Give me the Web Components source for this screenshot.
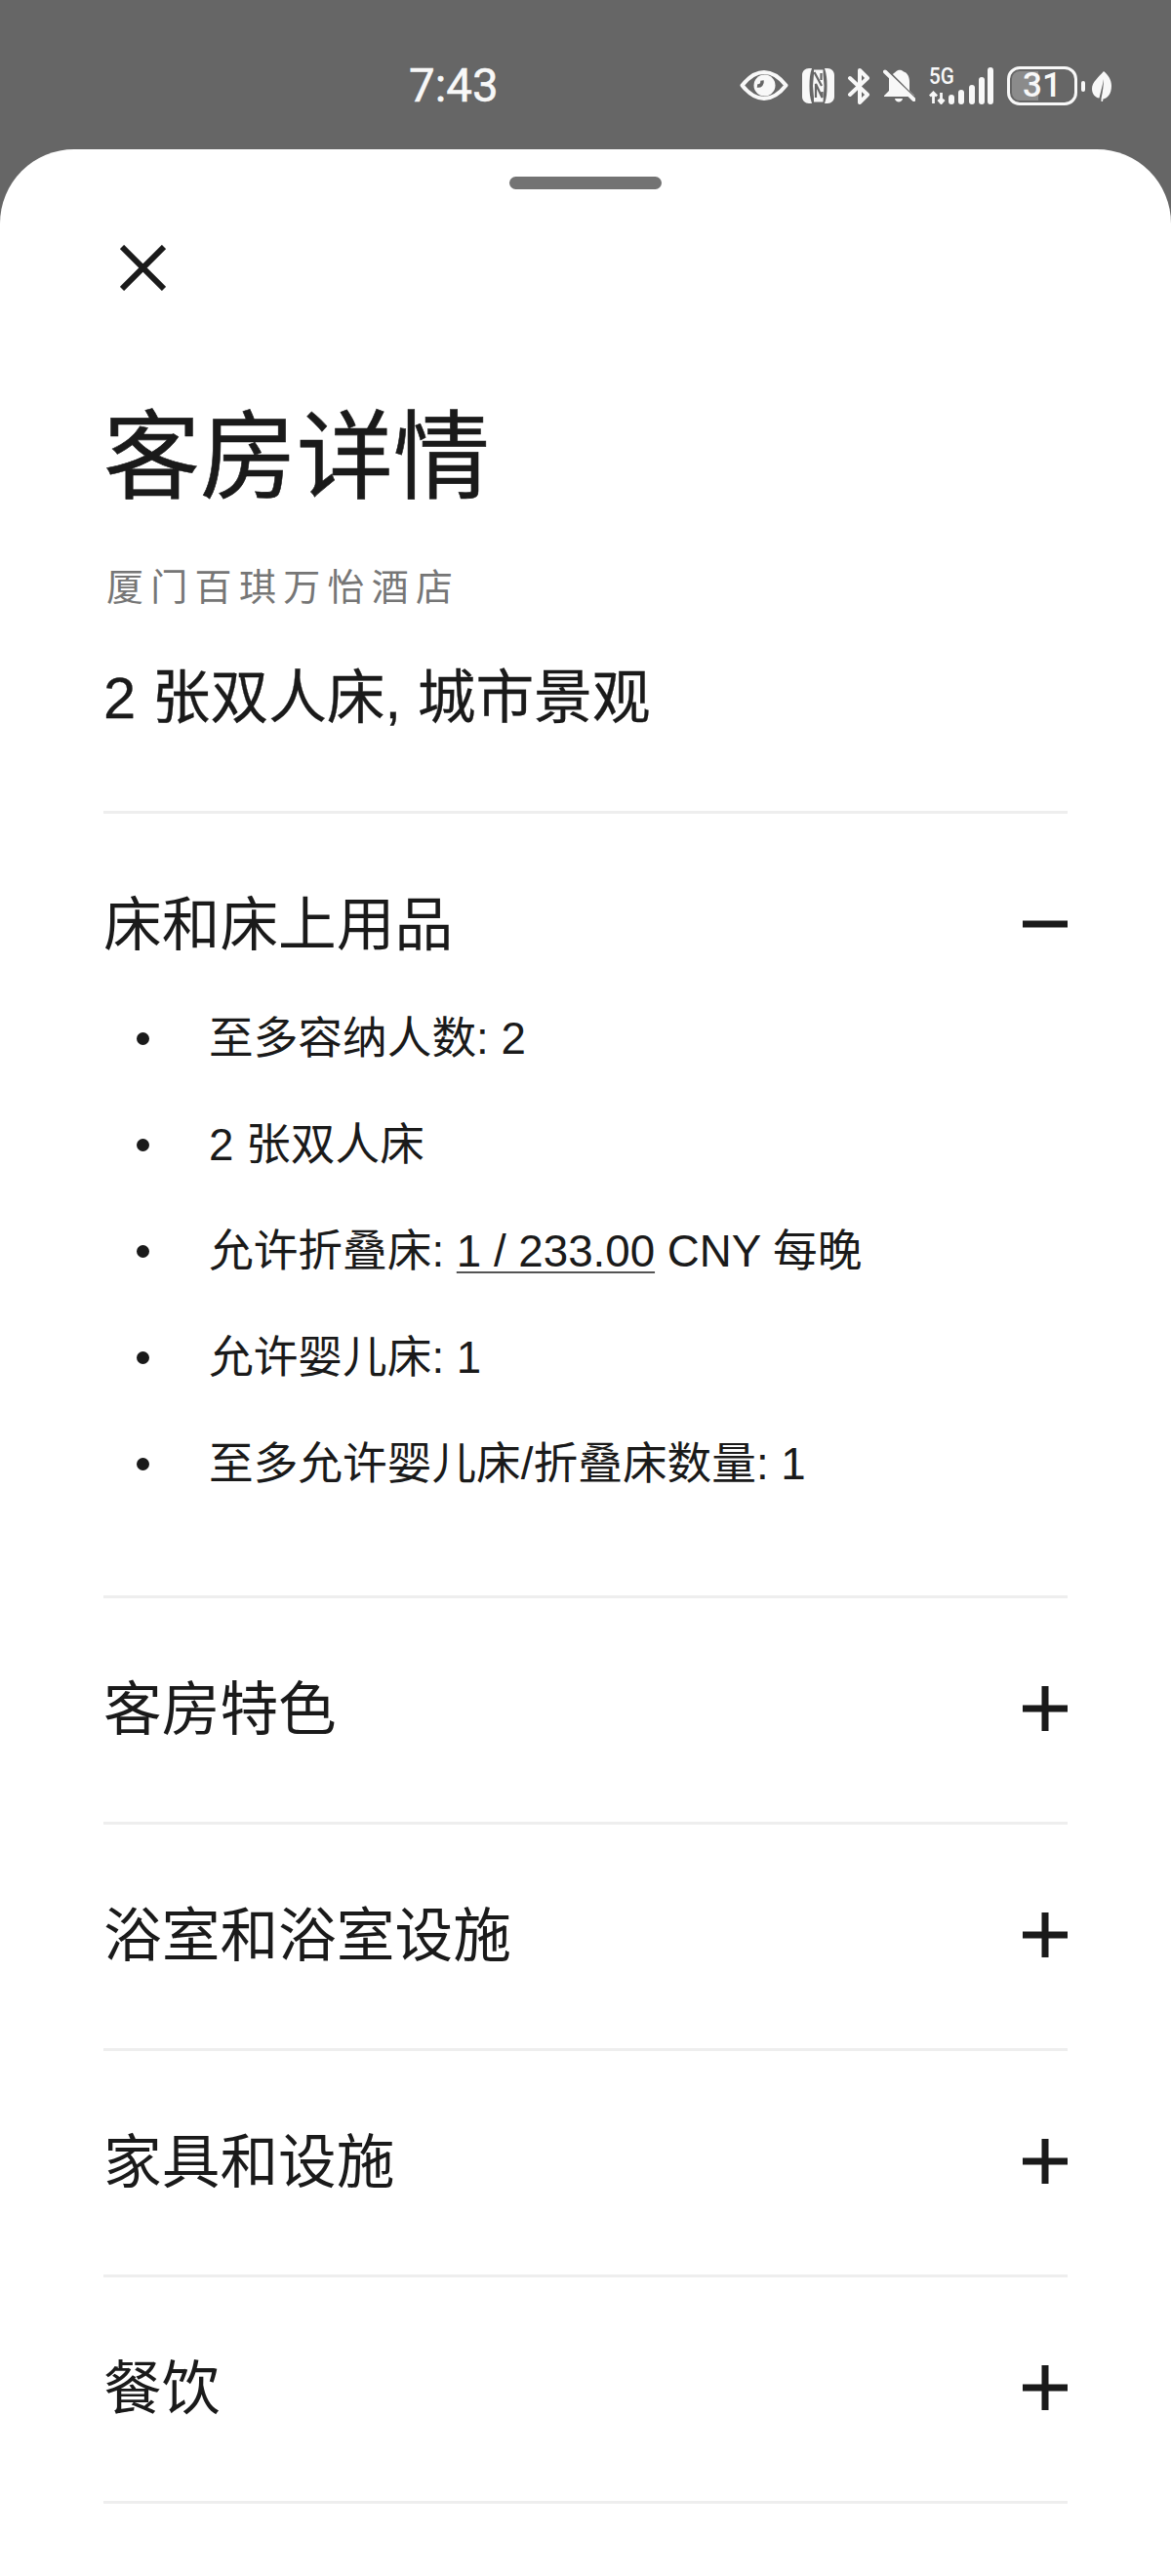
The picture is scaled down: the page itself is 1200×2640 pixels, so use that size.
<!DOCTYPE html>
<html lang="zh-CN">
<head>
<meta charset="utf-8">
<title>客房详情</title>
<style>
    html, body { margin: 0; background: #666666; }
    body { font-family: "Liberation Sans", "Noto Sans CJK SC", sans-serif; color: #1a1a1a; }
</style>
</head>
<body>
<phone-page>
    <status-bar slot="status" time="7:43" battery="31"></status-bar>
    <room-sheet slot="sheet" heading="客房详情" hotel="厦门百琪万怡酒店" room="2 张双人床, 城市景观">
        <room-section heading="床和床上用品" open>
            <room-bullet>至多容纳人数: 2</room-bullet>
            <room-bullet>2 张双人床</room-bullet>
            <room-bullet>允许折叠床: <u>1 / 233.00</u> CNY 每晚</room-bullet>
            <room-bullet>允许婴儿床: 1</room-bullet>
            <room-bullet>至多允许婴儿床/折叠床数量: 1</room-bullet>
        </room-section>
        <room-section heading="客房特色"></room-section>
        <room-section heading="浴室和浴室设施"></room-section>
        <room-section heading="家具和设施"></room-section>
        <room-section heading="餐饮"></room-section>
    </room-sheet>
</phone-page>

<script>
class PhonePage extends HTMLElement {
    constructor() {
        super();
        this.root = this.attachShadow({mode: "open"});
        this.root.innerHTML = `
            <style>
                :host { display: flex; flex-direction: column; width: 1200px; height: 2640px; overflow: hidden; }
            </style>
            <slot name="status"></slot>
            <slot name="sheet"></slot>
        `;
    }
}

class StatusBar extends HTMLElement {
    constructor() {
        super();
        this.root = this.attachShadow({mode: "open"});
        const grey = "#666666";
        this.root.innerHTML = `
            <style>
                :host { display: flex; align-items: center; box-sizing: border-box; height: 153px; padding: 68px 61px 45px 419px; background: #666666; color: #f8f8f8; }
                .time { font: 400 47.500px/43px Roboto, sans-serif; -webkit-text-stroke: .5px #f8f8f8; }
                .icons { display: flex; align-items: center; margin-left: auto; }
                svg { display: block; flex: none; }
                .signal { display: grid; width: 66px; height: 38px; margin-left: 14px; }
                .signal > * { grid-area: 1 / 1; }
                .net { font: 500 24px/18px Roboto, sans-serif; transform: scaleX(.86); transform-origin: left top; }
                .battery { box-sizing: border-box; width: 72px; height: 40px; margin-left: 14px; padding: 2px; border: 3px solid #f8f8f8; border-radius: 13px;
                    background: linear-gradient(90deg, #8b8b8b 0 43%, transparent 43%) content-box;
                    font: 500 35px/30px Roboto, sans-serif; text-align: center; }
            </style>
            <span class="time">${this.getAttribute("time")}</span>
            <div class="icons">
                <svg width="50" height="31" viewBox="0 0 50 31" style="margin-top:-1px">
                    <path d="M2.500 15.500C10 6 17 2 25 2s15 4 22.500 13.500C40 25 33 29 25 29S10 25 2.500 15.500Z" fill="none" stroke="#f8f8f8" stroke-width="4" stroke-linejoin="round"/>
                    <circle cx="25.500" cy="15.500" r="11" fill="#f8f8f8"/>
                    <path d="M23 10.500c.6 3.500-1.500 6-5 5.500" fill="none" stroke="${grey}" stroke-width="3.500"/>
                </svg>
                <svg width="33" height="36" viewBox="0 0 33 36" style="margin-left:14px">
                    <path d="M7 0C3 0 0 3 0 7V29C0 33 3 36 7 36H10C8 30 7.500 25 7.500 18S8 5 10 0Z" fill="#f8f8f8"/>
                    <path d="M26 36C30 36 33 33 33 29V7C33 3 30 0 26 0H23C25 6 25.500 11 25.500 18S25 31 23 36Z" fill="#f8f8f8"/>
                    <path d="M12 1.500H21.500V6L22.500 18 21.500 34.500H12V30L11 18 12 6Z" fill="#f8f8f8"/>
                    <path d="M12.500 4 20 18M14 30V16L20.500 30V24M19.500 5V12" fill="none" stroke="${grey}" stroke-width="2.200"/>
                </svg>
                <svg width="25" height="37" viewBox="0 0 25 37" style="margin-left:13px">
                    <path d="M3 10 21 27 13 35V2L21 10 3 27" fill="none" stroke="#f8f8f8" stroke-width="4" stroke-linecap="round" stroke-linejoin="round"/>
                </svg>
                <svg width="33" height="34" viewBox="0 0 33 34" style="margin-left:12px">
                    <path d="M13 2.500C15 0 19 0 21 2.500 25 3.500 27 8 27 13V22L32 27V28H1V27L6 22V8Z" fill="#f8f8f8"/>
                    <path d="M12 30H20C19.500 34.500 12.500 34.500 12 30Z" fill="#f8f8f8"/>
                    <path d="M-1 -3 33 31" stroke="${grey}" stroke-width="4"/>
                    <path d="M2 2.500 31.500 31" stroke="#f8f8f8" stroke-width="4" stroke-linecap="round"/>
                </svg>
                <div class="signal">
                    <span class="net">5G</span>
                    <svg width="66" height="38" viewBox="0 0 66 38">
                        <path d="M4.500 37V26.500M1 29.500 4.500 26 8 29.500M12.500 26V36.500M9.500 33 12.500 36.500 15.500 33" fill="none" stroke="#f8f8f8" stroke-width="2.800"/>
                        <rect x="20" y="28" width="6" height="10" rx="3" fill="#f8f8f8"/>
                        <rect x="30" y="23" width="6" height="15" rx="3" fill="#f8f8f8"/>
                        <rect x="41" y="18" width="6" height="20" rx="3" fill="#f8f8f8"/>
                        <rect x="51" y="10" width="6" height="28" rx="3" fill="#f8f8f8"/>
                        <rect x="60" y="0" width="6" height="38" rx="3" fill="#f8f8f8"/>
                    </svg>
                </div>
                <div class="battery">${this.getAttribute("battery")}</div>
                <svg width="4" height="11" viewBox="0 0 4 11" style="margin-left:4px">
                    <rect width="4" height="11" rx="2" fill="#f8f8f8"/>
                </svg>
                <svg width="20" height="31" viewBox="0 0 20 31" style="margin-left:7px">
                    <path d="M12 0C17 4 20 9 20 15 20 23 16 28 11.500 28.500L11 31H9.500L9.500 28C11 21 12 14 12 8 11 14 9 21 7.500 27.500 3 27 0 23 0 18 0 11 7 6 12 0Z" fill="#f8f8f8"/>
                </svg>
            </div>
        `;
    }
}

class RoomSheet extends HTMLElement {
    constructor() {
        super();
        this.root = this.attachShadow({mode: "open"});
        this.root.innerHTML = `
            <style>
                :host { display: block; flex: 1; box-sizing: border-box; padding: 28px 106px 0; background: #ffffff; border-radius: 76px 76px 0 0; color: #1a1a1a; }
                .handle { width: 156px; height: 13px; margin: 0 auto; border-radius: 7px; background: #737373; }
                .close { display: block; margin: 57px 0 0 17px; }
                h1 { margin: 111px 0 0; font-size: 99px; line-height: 120px; font-weight: 400; -webkit-text-stroke: .6px #1a1a1a; }
                .hotel { margin: 48px 0 0 3px; font-size: 38px; line-height: 50px; letter-spacing: 7.300px; color: #767676; }
                .room { margin: 53px 0 79px; font-size: 59.700px; line-height: 72px; -webkit-text-stroke: .3px #1a1a1a; }
            </style>
            <div class="handle"></div>
            <svg class="close" width="47" height="47" viewBox="0 0 47 47">
                <path d="M2 2 45 45M45 2 2 45" stroke="#1a1a1a" stroke-width="6" fill="none"/>
            </svg>
            <h1>${this.getAttribute("heading")}</h1>
            <div class="hotel">${this.getAttribute("hotel")}</div>
            <div class="room">${this.getAttribute("room")}</div>
            <slot></slot>
        `;
    }
}

class RoomSection extends HTMLElement {
    constructor() {
        super();
        this.root = this.attachShadow({mode: "open"});
        this.root.innerHTML = `
            <style>
                :host { display: block; padding: 77px 0 80px; border-top: 3px solid #eeeeee; }
                :host(:last-child) { border-bottom: 3px solid #eeeeee; }
                .head { display: flex; align-items: center; justify-content: space-between; height: 72px; font-size: 59.700px; line-height: 72px; }
                .head span { margin: 2px 0 -2px; }
                .list { margin-top: 27px; }
                svg { display: block; flex: none; }
            </style>
            <div class="head">
                <span>${this.getAttribute("heading")}</span>
                <svg width="46" height="46" viewBox="0 0 46 46" fill="#1a1a1a">
                    <rect y="19.500" width="46" height="7"/>
                    ${this.hasAttribute("open") ? "" : `<rect x="19.500" width="7" height="46"/>`}
                </svg>
            </div>
            ${this.hasAttribute("open") ? `<div class="list"><slot></slot></div>` : ""}
        `;
    }
}

class RoomBullet extends HTMLElement {
    constructor() {
        super();
        this.root = this.attachShadow({mode: "open"});
        this.root.innerHTML = `
            <style>
                :host { display: flex; align-items: center; height: 109px; font-size: 45.700px; line-height: 60px; }
                .dot { flex: none; width: 13px; height: 13px; margin: 0 61px 0 34px; border-radius: 50%; background: #1a1a1a; }
                ::slotted(u) { text-decoration-thickness: 2px; text-underline-offset: 5px; text-decoration-color: #555555; }
            </style>
            <span class="dot"></span>
            <span><slot></slot></span>
        `;
    }
}

window.customElements.define("phone-page", PhonePage);
window.customElements.define("status-bar", StatusBar);
window.customElements.define("room-sheet", RoomSheet);
window.customElements.define("room-section", RoomSection);
window.customElements.define("room-bullet", RoomBullet);
</script>
</body>
</html>
